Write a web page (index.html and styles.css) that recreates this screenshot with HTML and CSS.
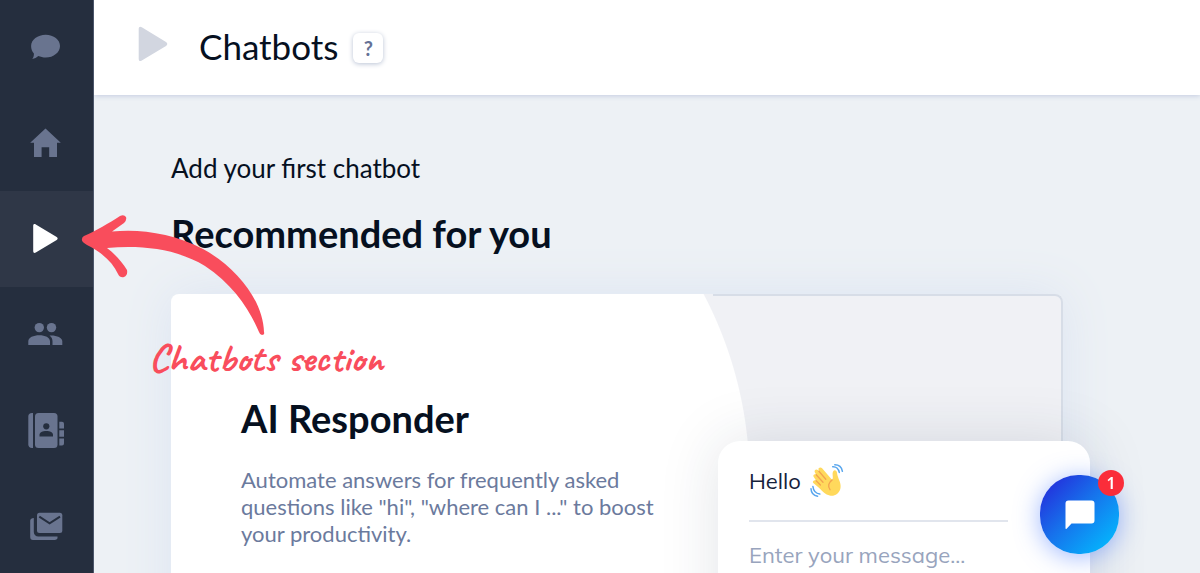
FILE: index.html
```html
<!DOCTYPE html>
<html lang="en">
<head>
<meta charset="utf-8">
<title>Chatbots</title>
<link rel="stylesheet" href="styles.css">
</head>
<body>
<div class="shell">
  <nav class="sidebar" aria-label="Main">
    <a class="nav-item" href="#chat" aria-label="Chat">
      <svg viewBox="0 0 36 36"><path d="M17.700 5.800C25.700 5.800 32 10.800 32 17S25.700 28.600 17.700 28.600C15 28.600 12.500 28 10.300 27.100C8.700 28.600 6.500 29.900 4.300 30C5.500 28.500 6 26.500 5.900 24.500C4.200 22.500 3.100 20 3.100 17C3.100 10.800 9.600 5.800 17.700 5.800Z"/></svg>
    </a>
    <a class="nav-item" href="#home" aria-label="Home">
      <svg viewBox="0 0 36 36"><path d="M17.500 3.500 32.800 17.800H29V32H21.200V22.300H13.600V32H6V17.800H2.200Z"/></svg>
    </a>
    <a class="nav-item nav-item-active" href="#chatbots" aria-label="Chatbots" aria-current="page">
      <svg viewBox="0 0 36 36"><path d="M5.200 5C5.200 3.200 6.300 2.600 7.800 3.500L28.700 16C30 16.800 30 18.200 28.700 19L7.800 31.500C6.300 32.400 5.200 31.800 5.200 30Z"/></svg>
    </a>
    <a class="nav-item" href="#visitors" aria-label="Visitors">
      <svg viewBox="0 0 36 36"><circle cx="11.300" cy="10.600" r="4.700"/><circle cx="23.500" cy="10.600" r="4.700"/><path d="M.3 28V24.300C.3 20.500 5.500 18.300 11.300 18.300S22 20.500 22 24.300V28ZM21.500 18.500C28 18 34.300 20.400 34.300 24.300V28H24.500V24.300C24.500 22 23.500 20 21.500 18.500Z"/></svg>
    </a>
    <a class="nav-item" href="#contacts" aria-label="Contacts">
      <svg viewBox="0 0 36 36"><path d="M5 0V35H4A3.700 3.700 0 0 1 .3 31.300V3.700A3.700 3.700 0 0 1 4 0Z"/><rect x="7" y="0" width="22.500" height="35" rx="3.500"/><path d="M31.300 8.800H34A2 2 0 0 1 36 10.800V15.500H31.300ZM31.300 17.200H36V23.800H31.300ZM31.300 25.500H36V30.500A2 2 0 0 1 34 32.500H31.300Z"/><g class="icon-hole"><circle cx="18.300" cy="13.300" r="3.100"/><path d="M11.500 23.500V21.800C11.500 19.300 14.500 17.900 18.300 17.900S25 19.300 25 21.800V23.500Z"/></g></svg>
    </a>
    <a class="nav-item" href="#email" aria-label="Email">
      <svg viewBox="0 0 36 36"><rect x="9" y="3.800" width="25.300" height="20.300" rx="2.500"/><path d="M2.200 11.500Q2.500 9 5.800 9V23A4.500 4.500 0 0 0 10.300 27.500H29.500A3 3 0 0 1 27 31H5A3 3 0 0 1 2.200 28Z"/><path class="icon-cut" d="M11.300 7.700 21.600 14.400 32 7.700"/></svg>
    </a>
  </nav>

  <div class="page">
    <header class="topbar">
      <svg class="title-icon" viewBox="0 0 30 36"><path d="M.7 3C.7.800 2 .1 3.800 1.200L28 16C29.700 17 29.700 18.900 28 20L3.800 34.600C2 35.700.7 35 .7 32.800Z"/></svg>
      <h1 class="title">Chatbots</h1>
      <button class="help" type="button" aria-label="Help">?</button>
    </header>

    <main class="content">
      <p class="intro">Add your first chatbot</p>
      <h2 class="section-title">Recommended for you</h2>
      <article class="card">
        <div class="card-copy">
          <h3 class="card-title">AI Responder</h3>
          <p class="card-text">Automate answers for frequently asked questions like "hi", "where can I ..." to boost your productivity.</p>
        </div>
        <div class="preview">
          <div class="widget">
            <div class="greeting">
              <span>Hello</span>
              <svg class="wave" viewBox="0 0 34 34" role="img" aria-label="Waving hand">
                <path fill="#ffd95c" d="M3.300 17C4.100 15.900 5.300 16 6.200 16.800L3.600 12.800C2.600 11.200 4.600 9.300 6.200 10.700L4.800 8.200C3.800 6.200 6.300 4.600 7.900 6.100L9 7.300 8.500 5.500C8 3.600 10.800 2.600 12.100 4.200L22.200 15.900C23.100 14.500 22.800 12.700 22.600 10.800C22.200 7.800 23.800 5.900 25.500 6.400C27.400 7.100 26.900 9.300 27.600 11.700C28.800 15.900 31.700 20 30.300 25.100C28.900 30.200 24.100 32.700 19.700 31.600C15.400 30.500 12.500 27.200 9.200 23.900L3.600 19.300C2.800 18.600 2.700 17.800 3.300 17Z"/>
                <path fill="none" stroke="#f3a34f" stroke-width="1.300" stroke-linecap="round" d="M6 16.600 10.400 21M6.200 10.700 13 18.300M8.900 7.300 15.800 15.200M22.200 15.900C18.500 18.300 17.500 22.500 20 25.700"/>
                <path fill="none" stroke="#58a6ee" stroke-width="1.500" stroke-linecap="round" d="M22.700 2.700C25.900 2.400 28.600 4.900 29.300 8.400M24.800.8C29 .8 31.700 3.300 32.400 7.300M2.900 22.500C3.400 27 6.100 29.500 9.800 30.100M1 24.700C1.200 28.800 3.700 31.600 7.600 32.200"/>
              </svg>
            </div>
            <input class="message" type="text" placeholder="Enter your message..." aria-label="Message">
          </div>
        </div>
      </article>
    </main>
  </div>
</div>

<figure class="callout">
  <svg class="callout-arrow" viewBox="0 0 186 124"><path d="M3 22C15 17 28 9 39 2Q43 0 45 3Q46 6 43 9L31 17.500C58 14.500 92 19 122 35C155 53 182 86 183 118Q184 121 181 121Q179 121 178 118C168 94 151 70 124 52C96 35 62 31 26 34C34 40 41 48 46 56Q47 61 43 63Q39 64 37 60C32 49 22 39 6 31Q0 28 1 25Q1 23 3 22Z"/></svg>
  <figcaption class="callout-text">Chatbots section</figcaption>
</figure>

<button class="launcher" type="button" aria-label="Open chat, 1 new message">
  <svg class="launcher-icon" viewBox="0 0 30 30"><path d="M3.500.5H26.500A3 3 0 0 1 29.500 3.500V20.500A3 3 0 0 1 26.500 23.500H6.500L1.600 28.700Q.5 29.500.5 28V3.500A3 3 0 0 1 3.500.5Z"/></svg>
  <span class="badge">1</span>
</button>
</body>
</html>
```
FILE: styles.css
```css
* {
  box-sizing: border-box;
}

body {
  margin: 0;
  overflow: hidden;
  color: #06101f;
  font-family: Lato, "Liberation Sans", sans-serif;
}

h1, h2, h3, p, figure {
  margin: 0;
}

button, input {
  font: inherit;
  border: 0;
}

.shell {
  display: grid;
  grid-template-columns: 94px 1fr;
  height: 100vh;
  overflow: hidden;
}

.sidebar {
  background: #252e3e;
  border-right: 1px solid #4c566a;
}

.nav-item {
  display: flex;
  align-items: center;
  justify-content: center;
  height: 96px;
  padding-right: 1px;
  fill: #69748f;
}

.nav-item:first-child {
  margin-top: -1px;
}

.nav-item svg {
  width: 36px;
  height: 36px;
}

.nav-item-active {
  background: #2f3747;
  fill: #fff;
}

.icon-hole {
  fill: #252e3e;
}

.icon-cut {
  fill: none;
  stroke: #252e3e;
  stroke-width: 2;
}

.page {
  min-width: 0;
  overflow: hidden;
  background: #edf1f5;
}

.topbar {
  display: flex;
  align-items: center;
  height: 95px;
  padding-left: 44px;
  background: #fff;
  box-shadow: 0 1px 5px #c4cce0;
}

.title-icon {
  width: 30px;
  height: 36px;
  margin-bottom: 8px;
  fill: #d2d6e0;
}

.title {
  margin-left: 31px;
  padding-bottom: 4px;
  font-size: 35px;
  font-weight: 400;
  line-height: 44px;
}

.help {
  width: 30px;
  height: 30px;
  margin-left: 15px;
  padding: 0;
  border-radius: 6px;
  background: #fff;
  box-shadow: 0 1px 5px #b9c2d4;
  color: #647196;
  font-size: 20px;
  font-weight: 700;
}

.content {
  padding: 57px 137px 0 77px;
}

.intro {
  font-size: 26px;
  line-height: 32px;
}

.section-title {
  margin-top: 25px;
  font-size: 38px;
  line-height: 48px;
}

.card {
  display: grid;
  grid-template-columns: 542px 1fr;
  min-height: 400px;
  margin-top: 37px;
  border-radius: 8px;
  background: radial-gradient(circle at 179px 186px, #fff 399px, #f0f1f5 400px);
  box-shadow: 0 0 50px #dce4f2;
}

.card-copy {
  padding: 100px 50px 0 70px;
}

.card-title {
  font-size: 38px;
  line-height: 48px;
}

.card-text {
  margin-top: 24px;
  color: #6b7a9d;
  font-size: 22px;
  line-height: 27px;
}

.preview {
  padding: 145px 0 0 5px;
  border: solid #d7dde7;
  border-width: 2px 2px 0 0;
  border-radius: 0 8px 0 0;
}

.widget {
  min-height: 240px;
  margin-right: -29px;
  border-radius: 22px;
  background: #fff;
  box-shadow: 0 0 60px #1c2d4a20;
}

.greeting {
  display: flex;
  align-items: center;
  gap: 9px;
  height: 81px;
  margin: 0 82px 0 31px;
  border-bottom: 2px solid #e1e5ed;
  color: #15213b;
  font-family: Mulish, Muli, Nunito, Lato, sans-serif;
  font-size: 22px;
}

.wave {
  width: 34px;
  height: 34px;
}

.message {
  width: 300px;
  margin: 17px 0 0 31px;
  padding: 0;
  background: none;
  font-family: Mulish, Muli, Nunito, Lato, sans-serif;
  font-size: 22px;
  line-height: 32px;
}

.message::placeholder {
  color: #98a4bd;
  opacity: 1;
}

.callout {
  position: absolute;
  top: 214px;
  left: 81px;
  color: #f94d5c;
}

.callout-arrow {
  display: block;
  width: 186px;
  height: 124px;
  fill: currentColor;
}

.callout-text {
  margin-left: 68px;
  font-family: Caveat, "Caveat Brush", Lato, cursive;
  font-size: 40px;
  font-weight: 700;
  line-height: 40px;
  white-space: nowrap;
}

.launcher {
  position: fixed;
  right: 81px;
  bottom: 19px;
  display: flex;
  align-items: center;
  justify-content: center;
  width: 79px;
  height: 79px;
  padding: 0;
  border-radius: 38px;
  background: linear-gradient(135deg, #2331dc 10%, #1770eb 45%, #04b6fd 90%);
  box-shadow: 0 3px 24px #3f73ff80;
}

.launcher-icon {
  width: 30px;
  height: 30px;
  fill: #fff;
}

.badge {
  position: absolute;
  top: -5px;
  right: -5px;
  width: 26px;
  height: 26px;
  border-radius: 50%;
  background: #fa2d3a;
  color: #fff;
  font-family: "Noto Sans", sans-serif;
  font-size: 16px;
  font-weight: 600;
  line-height: 26px;
}
```
